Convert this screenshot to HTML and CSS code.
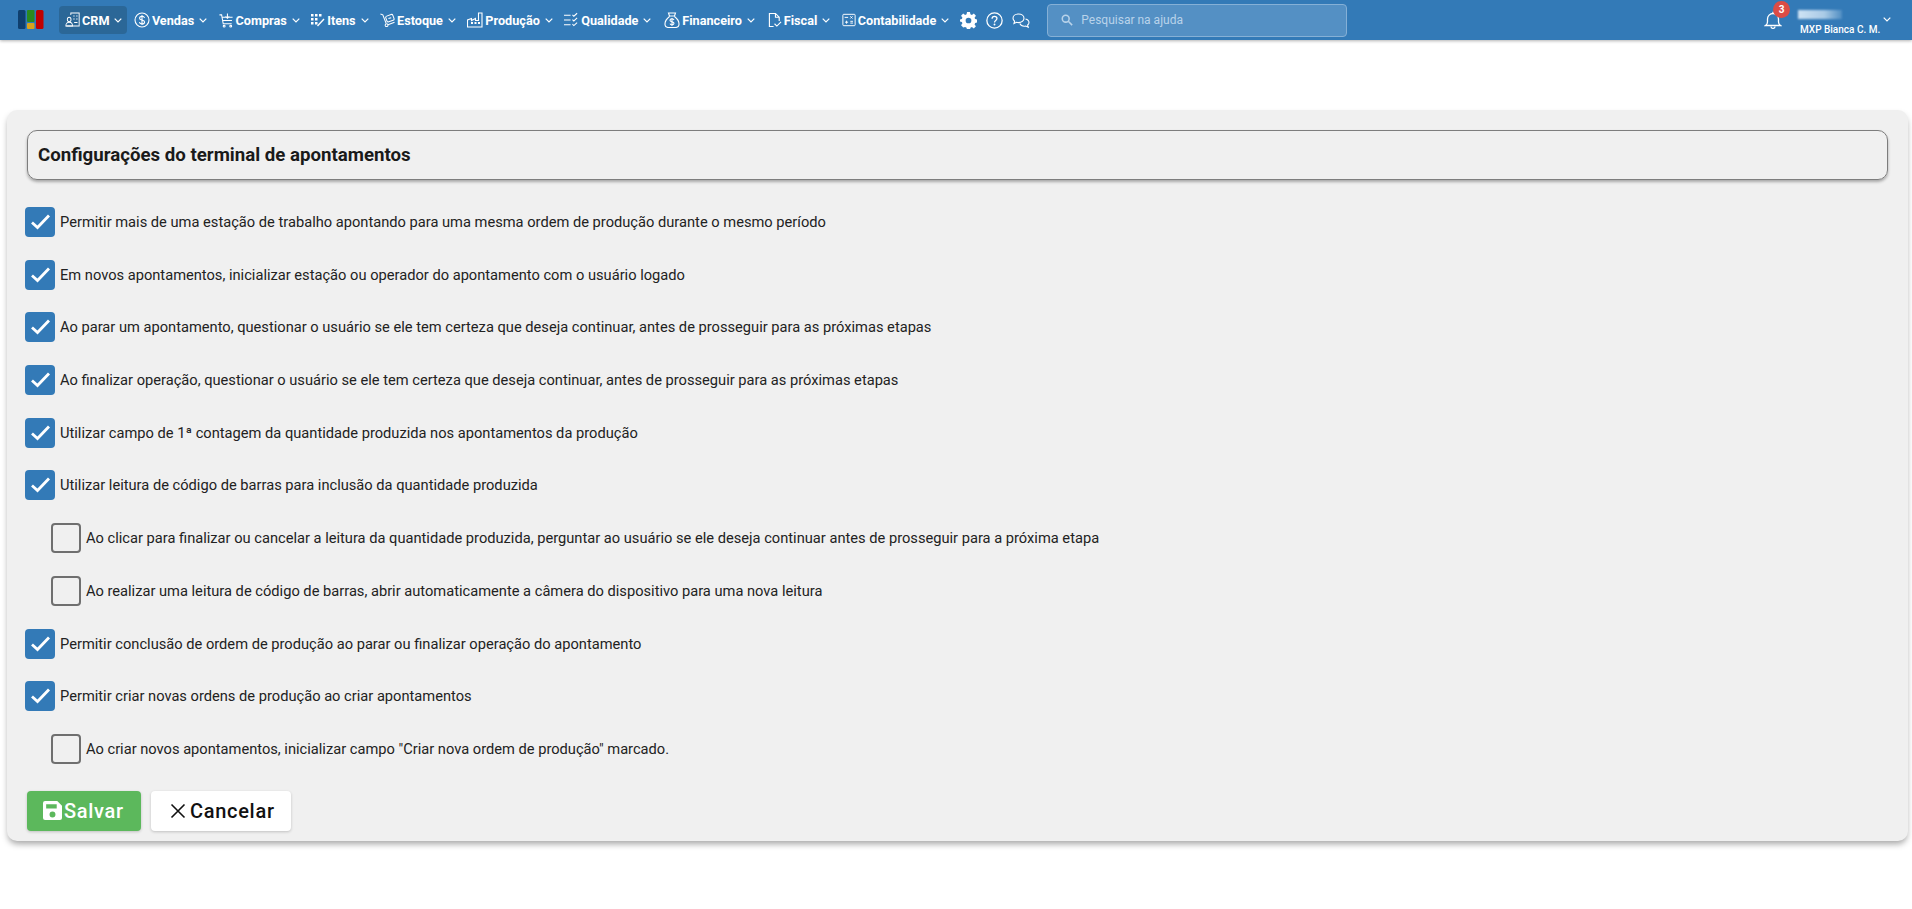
FILE: index.html
```html
<!DOCTYPE html>
<html lang="pt-BR">
<head>
<meta charset="utf-8">
<title>Configurações do terminal de apontamentos</title>
<link rel="stylesheet" href="styles.css">
</head>
<body>
<svg class="defs" width="0" height="0" aria-hidden="true">
  <symbol id="chev" viewBox="0 0 8 5"><path d="M.7.7L4 4 7.300.7" fill="none" stroke="currentColor" stroke-width="1.200"/></symbol>
  <symbol id="check" viewBox="0 0 30 30"><path d="M7 15.500l5.500 5L24 8.500" fill="none" stroke="#fff" stroke-width="2.800"/></symbol>
</svg>
<header class="topbar">
  <svg class="logo" viewBox="0 0 26 20" width="26" height="20">
    <rect x="0" y="0" width="7.500" height="19" rx="1.500" fill="#0f3f6e"/>
    <rect x="9" y="0" width="7.500" height="12" rx="1" fill="#2a8a1e"/>
    <rect x="9" y="13" width="7.500" height="6" rx="1" fill="#d9a21b"/>
    <rect x="18" y="0" width="7.500" height="19" rx="1.500" fill="#c00000"/>
  </svg>
  <nav class="menu">
    <a class="item active">
      <svg class="ico w15" viewBox="0 0 18 16" preserveAspectRatio="none"><g fill="none" stroke="currentColor" stroke-width="1.100"><path d="M7 3V1h10v13H1.500"/><circle cx="5" cy="7.500" r="2.200"/><path d="M1 14c0-5 8-5 8 0z"/><path d="M10 4h1.500M13.500 4H15M10 7h1.500M13.500 7H15M11 10.500h4"/></g></svg>
      <span>CRM</span><svg class="chev"><use href="#chev"/></svg>
    </a>
    <a class="item">
      <svg class="ico" viewBox="0 0 16 16"><g fill="none" stroke="currentColor" stroke-width="1.100"><circle cx="8" cy="8" r="7"/><path d="M10.500 6c-.3-1.300-1.300-1.800-2.500-1.800S5.600 4.900 5.600 6.200 6.800 7.700 8 8s2.600.8 2.600 2-1.300 2-2.600 2-2.300-.6-2.600-1.800M8 3v10"/></g></svg>
      <span>Vendas</span><svg class="chev"><use href="#chev"/></svg>
    </a>
    <a class="item">
      <svg class="ico w15 tall" viewBox="0 0 16 16"><g fill="none" stroke="currentColor" stroke-width="1.100"><path d="M.5 2h2.300l1.700 9.500h9M3.200 4.500h11.300M3.800 8h10M9 .5v5M7 3.500l2 2 2-2"/><circle cx="5.500" cy="14" r="1"/><circle cx="12.500" cy="14" r="1"/></g></svg>
      <span>Compras</span><svg class="chev"><use href="#chev"/></svg>
    </a>
    <a class="item">
      <svg class="ico w14" viewBox="0 0 14 14"><g fill="currentColor"><rect x="0" y="1" width="2.500" height="2.500"/><rect x="4" y="1" width="2.500" height="2.500"/><rect x="8" y="1" width="2.500" height="2.500"/><rect x="0" y="5" width="2.500" height="2.500"/><rect x="4" y="5" width="2.500" height="2.500"/><rect x="0" y="9" width="2.500" height="2.500"/><rect x="4" y="9" width="2.500" height="2.500"/></g><path d="M6 12.500l6.500-7 1 1-6.500 7z" fill="currentColor"/></svg>
      <span>Itens</span><svg class="chev"><use href="#chev"/></svg>
    </a>
    <a class="item">
      <svg class="ico w15" viewBox="0 0 16 16"><g fill="none" stroke="currentColor" stroke-width="1.100"><path d="M.5 1.500l2.500 1 3.500 9"/><circle cx="7" cy="13.500" r="1.500"/><path d="M8.500 13l7-2.500"/><rect x="6.500" y="3" width="8" height="6.500" rx="1.500" transform="rotate(-20 10 6)"/><path d="M9 6.500l3-1"/></g></svg>
      <span>Estoque</span><svg class="chev"><use href="#chev"/></svg>
    </a>
    <a class="item">
      <svg class="ico" viewBox="0 0 16 16"><g fill="none" stroke="currentColor" stroke-width="1.100"><path d="M.5 15V8l4-1.500v2l4-2v2h3V1h3.500v14z"/></g><path d="M4 10h2v2H4zM7.500 10h2v2h-2zM11 10h2v2h-2z" fill="currentColor"/></svg>
      <span>Produção</span><svg class="chev"><use href="#chev"/></svg>
    </a>
    <a class="item">
      <svg class="ico w15" viewBox="0 0 16 16"><g fill="none" stroke="currentColor" stroke-width="1.100"><path d="M0 3h7M0 8h7M0 13h7M9 2.500l1.500 1.500L14 .8M9 7.500L10.500 9 14 5.800M9 12.500l1.500 1.500L14 10.800"/></g></svg>
      <span>Qualidade</span><svg class="chev"><use href="#chev"/></svg>
    </a>
    <a class="item item-wide">
      <svg class="ico" viewBox="0 0 16 16"><g fill="none" stroke="currentColor" stroke-width="1.100"><path d="M5.500 4L4.500 1h7l-1 3zM5.500 4h5M5.500 4.500C3 6.500.8 10 1 12.500S3 15.500 4.500 15.500h7c1.500 0 3.300-.5 3.500-3S13 6.500 10.500 4.500"/><path d="M10 8c-.3-.8-1-1.200-2-1.200s-2 .5-2 1.500S7 9.500 8 9.800s2 .7 2 1.500-1 1.500-2 1.500-1.700-.4-2-1.200M8 6v8"/></g></svg>
      <span>Financeiro</span><svg class="chev"><use href="#chev"/></svg>
    </a>
    <a class="item item-wide">
      <svg class="ico w14" viewBox="1 0 15 16"><g fill="none" stroke="currentColor" stroke-width="1.200"><path d="M7 15H2.500V1h6.500l4 4v4M9 1v4h4M8 12l2.500 2.500L15 10"/></g></svg>
      <span>Fiscal</span><svg class="chev"><use href="#chev"/></svg>
    </a>
    <a class="item">
      <svg class="ico w14" viewBox="0 0 16 16"><g fill="none" stroke="currentColor" stroke-width="1.100"><rect x="1" y="1.500" width="14" height="13" rx="1"/><path d="M3 5h4M9.500 3.800l2.500 2.500M12 3.800L9.500 6.300M3.500 10.500h3.500M9.500 9.500h3M9.500 11.500h3M5.200 8.800v3.400"/></g></svg>
      <span>Contabilidade</span><svg class="chev"><use href="#chev"/></svg>
    </a>
  </nav>
  <div class="tools">
    <svg class="tool" viewBox="0 0 16 16"><path fill="currentColor" fill-rule="evenodd" d="M6.600 0h2.800l.4 2.200 1.400.6L13 1.500l2 2-1.300 1.800.6 1.400 2.200.4v2.800l-2.200.4-.6 1.400 1.300 1.800-2 2-1.800-1.300-1.400.6-.4 2.200H6.600l-.4-2.200-1.400-.6L3 14.500l-2-2 1.300-1.800-.6-1.400L-.500 8.900V7.100l2.200-.4.600-1.400L1 3.500l2-2 1.800 1.300 1.400-.6zM8 5.300a2.700 2.700 0 100 5.400 2.700 2.700 0 000-5.400z"/></svg>
    <svg class="tool" viewBox="0 0 16 16"><g fill="none" stroke="currentColor" stroke-width="1.200"><circle cx="8" cy="8" r="7.200"/><path d="M5.700 6.300C5.700 5 6.700 4.100 8 4.100s2.300.9 2.300 2.100c0 1.800-2.300 1.800-2.300 3.600"/></g><circle cx="8" cy="11.800" r=".9" fill="currentColor"/></svg>
    <svg class="tool tool-chat" viewBox="0 0 18 16"><g fill="none" stroke="currentColor" stroke-width="1.100"><path d="M6.500 1.500C3.500 1.500 1 3.300 1 5.700c0 1.200.6 2.200 1.600 3L2 11l2.500-1.200c.6.200 1.300.300 2 .300 3 0 5.500-1.900 5.500-4.400s-2.500-4.200-5.500-4.200z"/><path d="M13.500 6.500c2 .5 3.500 1.900 3.500 3.500 0 1-.5 1.900-1.400 2.500l.6 2.200-2.400-1.200c-2.500.5-5-.4-6-2.500"/></g></svg>
  </div>
  <label class="search">
    <svg class="search-ico" viewBox="0 0 14 14"><g fill="none" stroke="currentColor" stroke-width="1.800"><circle cx="5.500" cy="5.500" r="4"/><path d="M8.500 8.500L13 13"/></g></svg>
    <span>Pesquisar na ajuda</span>
  </label>
  <div class="account">
    <div class="bell">
      <svg class="bell-ico" viewBox="0 0 18 18"><g fill="none" stroke="currentColor" stroke-width="1.300"><path d="M1.500 14.500c1.500-1 2-2 2-3.500V8a5.500 5.500 0 0111 0v3c0 1.500.5 2.500 2 3.500z"/><path d="M7 15.500c0 2.500 4 2.500 4 0M9 .8v1.500"/></g></svg>
      <b class="badge">3</b>
    </div>
    <div class="user">
      <i class="blur"></i>
      <span class="name">MXP Bianca C. M.</span>
    </div>
    <svg class="chev user-chev"><use href="#chev"/></svg>
  </div>
</header>

<main class="panel">
  <h1 class="title">Configurações do terminal de apontamentos</h1>
  <ul class="opts">
    <li class="opt on"><span class="box"><svg viewBox="0 0 30 30"><use href="#check"/></svg></span>Permitir mais de uma estação de trabalho apontando para uma mesma ordem de produção durante o mesmo período</li>
    <li class="opt on"><span class="box"><svg viewBox="0 0 30 30"><use href="#check"/></svg></span>Em novos apontamentos, inicializar estação ou operador do apontamento com o usuário logado</li>
    <li class="opt on"><span class="box"><svg viewBox="0 0 30 30"><use href="#check"/></svg></span>Ao parar um apontamento, questionar o usuário se ele tem certeza que deseja continuar, antes de prosseguir para as próximas etapas</li>
    <li class="opt on"><span class="box"><svg viewBox="0 0 30 30"><use href="#check"/></svg></span>Ao finalizar operação, questionar o usuário se ele tem certeza que deseja continuar, antes de prosseguir para as próximas etapas</li>
    <li class="opt on"><span class="box"><svg viewBox="0 0 30 30"><use href="#check"/></svg></span>Utilizar campo de 1ª contagem da quantidade produzida nos apontamentos da produção</li>
    <li class="opt on"><span class="box"><svg viewBox="0 0 30 30"><use href="#check"/></svg></span>Utilizar leitura de código de barras para inclusão da quantidade produzida</li>
    <li class="opt sub"><span class="box"></span>Ao clicar para finalizar ou cancelar a leitura da quantidade produzida, perguntar ao usuário se ele deseja continuar antes de prosseguir para a próxima etapa</li>
    <li class="opt sub"><span class="box"></span>Ao realizar uma leitura de código de barras, abrir automaticamente a câmera do dispositivo para uma nova leitura</li>
    <li class="opt on"><span class="box"><svg viewBox="0 0 30 30"><use href="#check"/></svg></span>Permitir conclusão de ordem de produção ao parar ou finalizar operação do apontamento</li>
    <li class="opt on"><span class="box"><svg viewBox="0 0 30 30"><use href="#check"/></svg></span>Permitir criar novas ordens de produção ao criar apontamentos</li>
    <li class="opt sub"><span class="box"></span>Ao criar novos apontamentos, inicializar campo "Criar nova ordem de produção" marcado.</li>
  </ul>
  <div class="actions">
    <button class="btn save" type="button">
      <svg viewBox="0 0 18 18" width="19" height="19"><path fill="#fff" fill-rule="evenodd" d="M2 0h11.500L18 4.500V16a2 2 0 01-2 2H2a2 2 0 01-2-2V2a2 2 0 012-2zm1 3v4h10V3zm6 7a2.800 2.800 0 100 5.600A2.800 2.800 0 009 10z"/></svg>
      Salvar
    </button>
    <button class="btn cancel" type="button">
      <svg viewBox="0 0 16 16" width="16" height="16"><path d="M1.500 1.500l13 13M14.500 1.500l-13 13" fill="none" stroke="#111" stroke-width="1.600"/></svg>
      Cancelar
    </button>
  </div>
</main>
</body>
</html>
```
FILE: styles.css
```css
* { box-sizing: border-box; }
html, body { margin: 0; padding: 0; }
body {
  background: #fff;
  font-family: Roboto, "Liberation Sans", sans-serif;
  color: #212121;
  height: 909px;
  overflow: hidden;
}
.defs { position: absolute; }

.topbar {
  height: 40px;
  background: #337ab7;
  box-shadow: 0 1px 3px rgba(0,0,0,.3);
  color: #fff;
  display: flex;
  align-items: center;
  padding-left: 18px;
}
.logo { flex: none; margin-right: 15px; }
.menu { display: flex; align-items: center; gap: .4px; }
.item {
  display: flex;
  align-items: center;
  height: 28px;
  padding: 0 5px 0 6px;
  font-size: 12.670px;
  font-weight: 700;
  color: #fff;
  border-radius: 4px;
  white-space: nowrap;
}
.item.active { background: #2b6797; }
.item.item-wide { padding-left: 7.500px; }
.item span { margin-left: 2px; }
.ico { width: 16px; height: 16px; flex: none; }
.ico.w15 { width: 15px; }
.ico.w14 { width: 14px; }
.ico.tall { height: 17px; }
.chev { width: 8px; height: 5px; margin-left: 5px; flex: none; }
.tools { display: flex; align-items: center; gap: 9px; margin-left: 6px; }
.tool { width: 17px; height: 17px; flex: none; }
.tool-chat { width: 18px; }
.search {
  margin-left: 17px;
  width: 300px;
  height: 33px;
  display: flex;
  align-items: center;
  padding-left: 13px;
  gap: 8px;
  background: #5490c4;
  border: 1px solid #85b0d6;
  border-radius: 4px;
  color: #b9d3ea;
  font-size: 12px;
}
.search-ico { width: 12px; height: 12px; flex: none; }
.account { margin-left: auto; display: flex; align-items: center; padding-right: 21px; }
.bell { position: relative; width: 18px; height: 18px; margin-right: 16px; }
.bell-ico { width: 18px; height: 18px; display: block; }
.badge {
  position: absolute;
  left: 9px;
  top: -10px;
  width: 17px;
  height: 17px;
  border-radius: 50%;
  background: #dc4c45;
  color: #fff;
  font-size: 10px;
  font-weight: 700;
  line-height: 17px;
  text-align: center;
}
.user { width: 85px; display: flex; flex-direction: column; gap: 5px; padding-top: 6px; }
.blur { display: block; width: 44px; height: 9px; background: linear-gradient(90deg, #cfe3f4, #a9cae6 60%, #4f8dc2); filter: blur(1px); }
.name { font-size: 10px; font-weight: 500; white-space: nowrap; line-height: 12px; padding-left: 2px; }
.user-chev { margin: -2px 0 0 0; }

.panel {
  margin: 70px 4px 0 7px;
  height: 731px;
  background: #f0f0f0;
  border-radius: 10px;
  box-shadow: 0 4px 6px -1px rgba(0,0,0,.35);
  padding: 20px 20px 0 18px;
}
.title {
  margin: 0 0 0 2px;
  height: 50px;
  border: 1px solid #7d7d7d;
  border-radius: 10px;
  box-shadow: 0 2px 3px rgba(0,0,0,.3);
  display: flex;
  align-items: center;
  padding-left: 10px;
  font-size: 18.670px;
  font-weight: 700;
  color: #1a1a1a;
}
.opts { list-style: none; margin: 27px 0 0; padding: 0; display: flex; flex-direction: column; gap: 22.700px; }
.opt {
  display: flex;
  align-items: center;
  height: 30px;
  font-size: 14.670px;
  color: #222;
  white-space: nowrap;
}
.opt.sub { padding-left: 26px; }
.box {
  width: 30px;
  height: 30px;
  border-radius: 4px;
  margin-right: 5px;
  flex: none;
  display: block;
}
.box svg { display: block; width: 30px; height: 30px; }
.on .box { background: #337ab7; }
.sub .box { border: 2px solid #6f6f6f; }
.actions { display: flex; gap: 10px; margin: 27px 0 0 2px; }
.btn {
  height: 40px;
  border: 0;
  border-radius: 4px;
  display: flex;
  align-items: center;
  gap: 2px;
  font-family: Roboto, "Liberation Sans", sans-serif;
  font-size: 20px;
  font-weight: 500;
  letter-spacing: .7px;
  box-shadow: 0 1px 3px rgba(0,0,0,.2);
}
.save { width: 114px; background: #5cb85c; color: #fff; padding: 0 0 0 16px; }
.cancel { width: 140px; background: #fff; color: #111; padding: 0 0 0 19px; gap: 4px; }
```
